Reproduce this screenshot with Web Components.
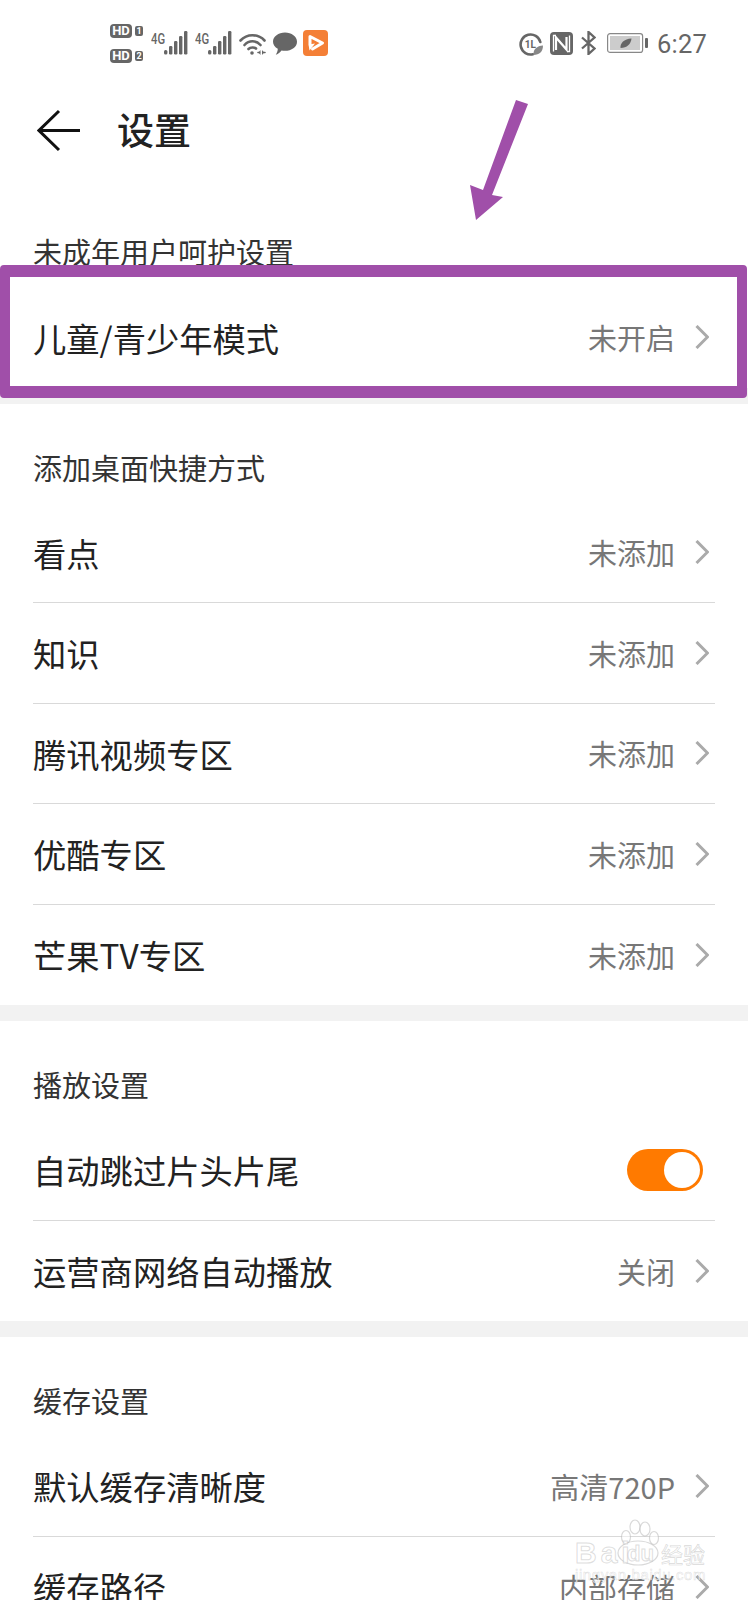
<!DOCTYPE html>
<html lang="zh-CN">
<head>
<meta charset="utf-8">
<title>设置</title>
<style>
  html, body {
    margin: 0;
    height: 1600px;
    overflow: hidden;
    background: #fff;
    font-family: "Noto Sans CJK SC", "Noto Sans", sans-serif;
    color: #222;
  }
  settings-page { position: relative; }
</style>
</head>
<body>
<settings-page>
  <status-bar></status-bar>
  <app-header>设置</app-header>
  <setting-section label="未成年用户呵护设置">
    <setting-row value="未开启">儿童/青少年模式</setting-row>
  </setting-section>
  <setting-section label="添加桌面快捷方式">
    <setting-row value="未添加" divider>看点</setting-row>
    <setting-row value="未添加" divider>知识</setting-row>
    <setting-row value="未添加" divider>腾讯视频专区</setting-row>
    <setting-row value="未添加" divider>优酷专区</setting-row>
    <setting-row value="未添加">芒果TV专区</setting-row>
  </setting-section>
  <setting-section label="播放设置">
    <setting-row divider>自动跳过片头片尾<toggle-switch slot="control"></toggle-switch></setting-row>
    <setting-row value="关闭">运营商网络自动播放</setting-row>
  </setting-section>
  <setting-section label="缓存设置">
    <setting-row value="高清720P" divider>默认缓存清晰度</setting-row>
    <setting-row value="内部存储">缓存路径</setting-row>
  </setting-section>
  <guide-callout></guide-callout>
  <baidu-mark></baidu-mark>
</settings-page>

<script>
// Page wrapper, the callout and watermark are positioned against it.
customElements.define('settings-page', class extends HTMLElement {
  constructor () {
    super()
    this.attachShadow({ mode: 'open' }).innerHTML = `
      <style>
        :host { display: block; width: 748px; height: 1600px; overflow: hidden; }
      </style>
      <slot></slot>
    `
  }
})

customElements.define('status-bar', class extends HTMLElement {
  constructor () {
    super()
    const signal = `
      <span class="net">4G</span>
      <svg class="bars" width="24" height="24" viewBox="0 0 24 24" fill="#666">
        <rect x="0" y="19" width="3.4" height="4.5" rx="1.5"/>
        <rect x="5" y="15" width="3.4" height="8.5" rx="1.2"/>
        <rect x="10" y="10" width="3.4" height="13.5" rx="1.2"/>
        <rect x="15" y="5" width="3.4" height="18.5" rx="1.2"/>
        <rect x="20" y="0" width="3.4" height="23.5" rx="1.2"/>
      </svg>`
    this.attachShadow({ mode: 'open' }).innerHTML = `
      <style>
        :host {
          display: flex;
          height: 88px;
          box-sizing: border-box;
          padding: 24px 41px 0 110px;
          color: #666;
          font-family: Roboto, "Liberation Sans", sans-serif;
        }
        .left, .right { display: flex; align-items: flex-start; }
        .right { margin-left: auto; }
        .hd { display: flex; flex-direction: column; gap: 11px; width: 41px; }
        .hd div { display: flex; align-items: center; gap: 3px; height: 14px; }
        .hd b {
          width: 22px; height: 14px; line-height: 14px; border-radius: 4px;
          background: #666; color: #fff; font-size: 13px; text-align: center;
        }
        .hd i {
          width: 8px; height: 10px; border-radius: 2px; background: #666; color: #fff;
          font-size: 9px; line-height: 10px; font-style: normal; text-align: center; font-weight: 700;
        }
        .net { width: 13px; margin-top: 7px; font-size: 15px; line-height: 16px; font-weight: 500; transform: scaleX(.75); transform-origin: left; }
        .bars { margin-top: 7px; }
        .sig2 { display: flex; margin-left: 7px; }
        .sig1 { display: flex; }
        .time { font-size: 25.500px; line-height: 30px; margin: 5px 0 0 9px; letter-spacing: .2px; }
      </style>
      <div class="left">
        <div class="hd">
          <div><b>HD</b><i>1</i></div>
          <div><b>HD</b><i>2</i></div>
        </div>
        <div class="sig1">${signal}</div>
        <div class="sig2">${signal}</div>
        <svg style="margin:8px 0 0 7px" width="27" height="24" viewBox="0 0 27 24" fill="none" stroke="#666" stroke-width="2.6" stroke-linecap="round">
          <path d="M1.5 8.5 C8 1.5 19 1.5 25.5 8.5"/>
          <path d="M5.5 13 C10 8 17 8 21.5 13"/>
          <path d="M9.5 17 C11.5 15 15.500 15 17 16.500"/>
          <circle cx="13" cy="21" r="1.800" fill="#666" stroke="none"/>
          <path d="M19 20.500h1.500M24 20.500h2" stroke-width="1.600"/>
          <path d="M21.500 18v5l-2 -2.500z" fill="#666" stroke="none"/>
          <path d="M23 18v5l2 -2.500z" fill="#666" stroke="none"/>
        </svg>
        <svg style="margin:8px 0 0 7px" width="24" height="23" viewBox="0 0 24 23" fill="#666">
          <path d="M12 0.500C18.500 0.500 24 4.500 24 9.700C24 15 18.500 18.800 12 18.800C10.800 18.800 9.600 18.700 8.500 18.400C7 20.500 4.500 22.500 2.800 22.700C4 21 4.800 18.800 4.800 16.800C1.900 15.200 0 12.600 0 9.700C0 4.500 5.500 0.500 12 0.500Z"/>
        </svg>
        <svg style="margin:6px 0 0 6px" width="25" height="26" viewBox="0 0 25 26">
          <rect width="25" height="26" rx="4" fill="#f47f36"/>
          <path d="M7 14V6.500L19.500 13L9.500 19" fill="none" stroke="#fff" stroke-width="3" stroke-linejoin="round" stroke-linecap="round"/>
          <path d="M5.500 14.500L12 13.500L6.500 20.500Z" fill="#fff"/>
        </svg>
      </div>
      <div class="right">
        <svg style="margin-top:9px" width="24" height="23" viewBox="0 0 24 23" fill="none">
          <path d="M14 21.200A10 10 0 1 1 21.300 9" stroke="#666" stroke-width="2.600" stroke-linecap="round"/>
          <text x="5.700" y="15" font-family="Roboto, Liberation Sans, sans-serif" font-size="10" font-weight="700" fill="#666">1L</text>
          <path d="M14.500 22C14 16 18 13 24 12.500C24 18.500 20.500 22 14.500 22Z" fill="#888"/>
        </svg>
        <svg style="margin:8px 0 0 7px" width="23" height="23" viewBox="0 0 23 23">
          <rect width="23" height="23" rx="4" fill="#666"/>
          <path d="M6 18V5.500L16.500 17.500V5" fill="none" stroke="#fff" stroke-width="2.200"/>
          <path d="M3.500 19.500V3.500H6M19.500 3.500V19.500H17" fill="none" stroke="#fff" stroke-width="1.300"/>
        </svg>
        <svg style="margin:7px 0 0 8px" width="15" height="24" viewBox="0 0 15 24" fill="none" stroke="#666" stroke-width="2.300">
          <path d="M1 6.500L13.500 17.500L7.500 23V1L13.500 6.500L1 17.500"/>
        </svg>
        <svg style="margin:9px 0 0 11px" width="41" height="20" viewBox="0 0 41 20">
          <rect x=".6" y=".6" width="35" height="18.800" rx="2.500" fill="#fff" stroke="#888" stroke-width="1.200"/>
          <rect x="3" y="3" width="30" height="14" fill="#ccc"/>
          <rect x="38" y="5" width="3" height="10" rx="1" fill="#666"/>
          <path d="M13.500 15C13 10 17 6 24.500 5.500C24 11 20 15 13.500 15Z" fill="#666"/>
        </svg>
        <span class="time">6:27</span>
      </div>
    `
  }
})

customElements.define('app-header', class extends HTMLElement {
  constructor () {
    super()
    this.attachShadow({ mode: 'open' }).innerHTML = `
      <style>
        :host {
          display: flex;
          align-items: center;
          height: 84px;
          margin-bottom: 16px;
          padding-left: 37px;
          font-size: 37px;
          font-weight: 500;
          color: #222;
        }
        svg { display: block; margin-right: 37px; }
        span { display: block; margin-top: -2px; }
      </style>
      <svg width="43" height="43" viewBox="0 0 43 43" fill="none" stroke="#111" stroke-width="3">
        <path d="M22 2L2 21.500L22 41M2 21.500H43"/>
      </svg>
      <span><slot></slot></span>
    `
  }
})

customElements.define('setting-section', class extends HTMLElement {
  constructor () {
    super()
    this.attachShadow({ mode: 'open' }).innerHTML = `
      <style>
        :host { display: block; border-bottom: 16.500px solid #f2f2f2; }
        :host(:last-of-type) { border-bottom: 0; }
        .label {
          box-sizing: border-box;
          height: 99px;
          padding: 41px 33px 0;
          font-size: 29px;
          line-height: 44px;
          color: #333;
        }
      </style>
      <div class="label"></div>
      <slot></slot>
    `
  }

  connectedCallback () {
    this.shadowRoot.querySelector('.label').textContent = this.getAttribute('label')
  }
})

customElements.define('setting-row', class extends HTMLElement {
  constructor () {
    super()
    this.attachShadow({ mode: 'open' }).innerHTML = `
      <style>
        :host { display: block; padding: 0 33px; }
        .row {
          display: flex;
          align-items: center;
          box-sizing: border-box;
          height: 100.500px;
          font-size: 33.300px;
          color: #222;
        }
        :host([divider]) .row { border-bottom: 1px solid #d9d9d9; }
        .value { margin-left: auto; font-size: 29px; color: #777; }
        svg { margin: 0 6px 0 20px; flex: none; }
        ::slotted([slot=control]) { margin-left: auto; margin-right: 12px; }
        :host(:not([value])) svg, :host(:not([value])) .value { display: none; }
      </style>
      <div class="row">
        <slot></slot>
        <slot name="control"></slot>
        <span class="value"></span>
        <svg width="14" height="24" viewBox="0 0 14 24" fill="none" stroke="#aaa" stroke-width="3">
          <path d="M1.500 1L12.500 12L1.500 23"/>
        </svg>
      </div>
    `
  }

  connectedCallback () {
    this.shadowRoot.querySelector('.value').textContent = this.getAttribute('value') || ''
  }
})

customElements.define('toggle-switch', class extends HTMLElement {
  constructor () {
    super()
    this.attachShadow({ mode: 'open' }).innerHTML = `
      <style>
        :host {
          display: flex;
          justify-content: flex-end;
          align-items: center;
          box-sizing: border-box;
          width: 76px;
          height: 42px;
          padding-right: 3px;
          border-radius: 21px;
          background: #ff7a00;
        }
        div { width: 36px; height: 36px; border-radius: 50%; background: #fff; }
      </style>
      <div></div>
    `
  }
})

// The purple frame and arrow drawn over the screenshot.
customElements.define('guide-callout', class extends HTMLElement {
  constructor () {
    super()
    this.attachShadow({ mode: 'open' }).innerHTML = `
      <style>
        :host { position: absolute; inset: 0; pointer-events: none; display: block; }
        .frame {
          position: absolute;
          left: 0;
          top: 265px;
          width: 747px;
          height: 133px;
          box-sizing: border-box;
          border: solid #a04fa9;
          border-width: 12px 10px;
          border-radius: 4px;
        }
        svg { position: absolute; left: 0; top: 0; }
      </style>
      <div class="frame"></div>
      <svg width="748" height="300" viewBox="0 0 748 300">
        <polygon fill="#a04fa9" points="516,100 528,104 492,195 503,197 476,220 470,185 483,190"/>
      </svg>
    `
  }
})

customElements.define('baidu-mark', class extends HTMLElement {
  constructor () {
    super()
    this.attachShadow({ mode: 'open' }).innerHTML = `
      <style>
        :host {
          position: absolute;
          left: 570px;
          top: 1516px;
          width: 150px;
          height: 70px;
          display: block;
          font-family: "Liberation Sans", "Noto Sans CJK SC", sans-serif;
          color: rgba(255, 255, 255, .7);
          -webkit-text-stroke: 1px rgba(170, 170, 170, .4);
        }
        svg { position: absolute; left: 44px; top: 2px; }
        span { position: absolute; white-space: nowrap; }
        .bai { left: 5px; top: 22px; font-size: 30px; line-height: 30px; font-weight: 700; letter-spacing: 4px; }
        .du { left: 57px; top: 26px; font-size: 22px; line-height: 24px; font-weight: 700; }
        .cn { left: 91px; top: 23px; font-size: 22px; line-height: 28px; font-family: "Noto Sans CJK SC", sans-serif; -webkit-text-stroke: .7px rgba(170, 170, 170, .45); }
        .url { left: 5px; top: 51px; font-size: 15px; line-height: 16px; letter-spacing: .6px; -webkit-text-stroke: .5px rgba(170, 170, 170, .4); }
      </style>
      <svg width="48" height="50" viewBox="0 0 48 50" fill="rgba(255,255,255,.5)" stroke="rgba(170,170,170,.45)" stroke-width="1.200">
        <ellipse cx="12" cy="19" rx="4.500" ry="6.500"/>
        <ellipse cx="21" cy="9" rx="5" ry="7"/>
        <ellipse cx="31" cy="11" rx="5" ry="7"/>
        <ellipse cx="40" cy="20" rx="4.500" ry="6.500"/>
        <ellipse cx="24" cy="35" rx="20" ry="12"/>
      </svg>
      <span class="bai">Bai</span>
      <span class="du">du</span>
      <span class="cn">经验</span>
      <span class="url">jingyan.baidu.com</span>
    `
  }
})
</script>
</body>
</html>
